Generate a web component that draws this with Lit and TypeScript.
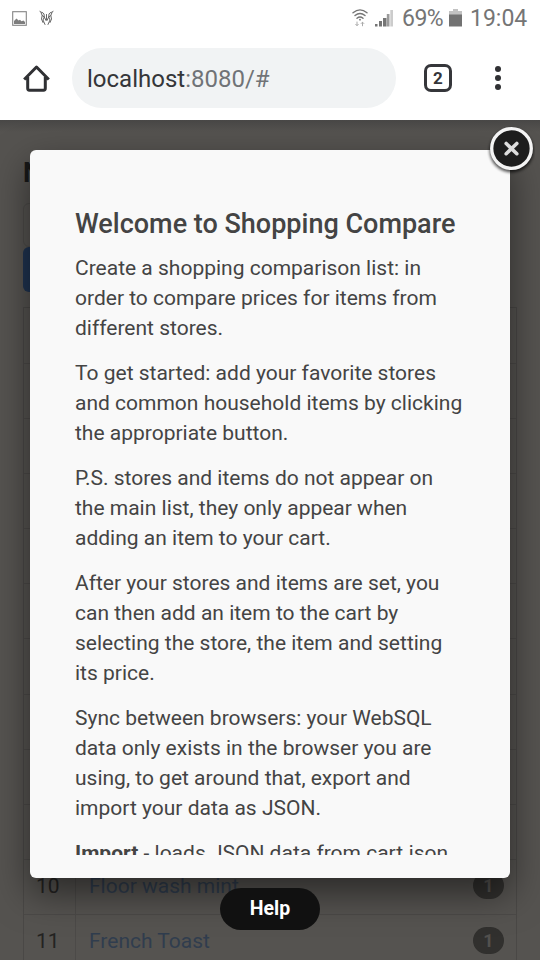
import { LitElement, html, css, svg } from "lit";
import { customElement } from "lit/decorators.js";

const paragraphs: string[][] = [
  ["Create a shopping comparison list: in", "order to compare prices for items from", "different stores."],
  ["To get started: add your favorite stores", "and common household items by clicking", "the appropriate button."],
  ["P.S. stores and items do not appear on", "the main list, they only appear when", "adding an item to your cart."],
  ["After your stores and items are set, you", "can then add an item to the cart by", "selecting the store, the item and setting", "its price."],
  ["Sync between browsers: your WebSQL", "data only exists in the browser you are", "using, to get around that, export and", "import your data as JSON."],
];

const rows = Array.from({ length: 11 }, (_, i) => ({
  n: i + 1,
  name: i === 9 ? "Floor wash mint" : i === 10 ? "French Toast" : "",
  count: i >= 9 ? 1 : 0,
}));

@customElement("status-bar")
class StatusBar extends LitElement {
  static styles = css`
    :host { display: flex; height: 36px; align-items: center; padding: 0 12px 0 12px; color: #757575;
      font: 23px/36px Roboto, sans-serif; }
    svg { display: block; flex: none; }
    .pic { margin-right: 12px; }
    .gap { flex: 1; }
    .wifi { margin-right: 7px; }
    .pct { margin: 2px 0 0 9px; width: 43px; letter-spacing: -0.5px; font-size: 23px; white-space: nowrap; }
    .bat { margin-left: 4px; }
    .time { margin: 2px 0 0 8px; width: 58px; letter-spacing: 0; white-space: nowrap; }
  `;
  render() {
    return html`
      <svg class="pic" width="15" height="15" viewBox="0 0 15 15">
        <rect x=".7" y=".7" width="13.6" height="13.6" fill="none" stroke="#858585" stroke-width="1.1"/>
        <path d="M2 13V10L4.500 7.500 6.500 9.500l1.500-.8L9.500 10.300l2-.8 1.500 1.500V13z" fill="#7d7d7d"/>
      </svg>
      <svg width="15" height="16" viewBox="0 0 15 16" fill="none" stroke="#666" stroke-width="1" stroke-linecap="round" stroke-linejoin="round">
        <path d="M.8 1.200C1.500 3 4 1.800 5 4L5.300 7M14.200 1.200C13.500 3 11 1.800 10 4L9.700 7M2 2.500 3.200 5.500 5.300 7 4 10 6 14.500M13 2.500 11.800 5.500 9.700 7 11 10 9 14.500M3.200 5.500 2.500 9 4 12.500M11.800 5.500 12.500 9 11 12.500M7.500 4.500V9.500M5.300 7 7 10.500M9.700 7 8 10.500"/>
      </svg>
      <span class="gap"></span>
      <svg class="wifi" width="16" height="18" viewBox="0 0 16 18" fill="none" stroke="#757575" stroke-width="1.400" stroke-linecap="round">
        <path d="M1 3.800Q8-2 15 3.800M3 6.500Q8 2.300 13 6.500M5 9.200Q8 6.600 11 9.200"/>
        <circle cx="8" cy="10.700" r=".9" fill="#757575" stroke="none"/>
        <path d="M5 13v3.500M3.700 15.300 5 16.600l1.300-1.300M10.500 16.800v-3.500M9.200 14.500l1.300-1.300 1.300 1.300" stroke="#aaa" stroke-width="1"/>
      </svg>
      <svg width="18" height="18" viewBox="0 0 18 18" fill="#757575">
        <path d="M0 15h2.500v2.500H0zM4 12h3v5.500H4zM8 9h3.500v8.500H8z"/>
        <path d="M11.800 5h2.700v12.500h-2.700z" fill="#9b9b9b"/><path d="M15.300 1H18v16.500h-2.700z" fill="#ccc"/>
      </svg>
      <span class="pct">69%</span>
      <svg class="bat" width="13" height="18" viewBox="0 0 13 18">
        <path d="M4 0h5v2h4v4H0V2h4z" fill="#c2c2c2"/><path d="M0 5.500h13V17.500H0z" fill="#727272"/>
      </svg>
      <span class="time">19:04</span>`;
  }
}

@customElement("address-bar")
class AddressBar extends LitElement {
  static styles = css`
    :host { display: flex; height: 84px; align-items: center; padding: 0 39px 0 23px; font-family: Roboto, sans-serif; }
    svg { display: block; flex: none; }
    .url { flex: none; box-sizing: border-box; width: 324px; height: 60px; border-radius: 30px; background: #f1f3f4;
      margin: 0 28px 0 22px; padding-left: 15px; font-size: 24px; line-height: 62px; color: #343639; }
    .port { color: #707377; }
    .tabs { flex: none; box-sizing: border-box; width: 28px; height: 28px; border: 3px solid #35363a; border-radius: 7px;
      color: #35363a; font-weight: 700; font-size: 17px; line-height: 22px; text-align: center; }
    .menu { margin-left: auto; }
  `;
  render() {
    return html`
      <svg width="27" height="28" viewBox="0 0 27 28" fill="none" stroke="#303134" stroke-width="3" stroke-linejoin="round">
        <path d="M1.200 15.500 13.500 3 25.800 15.500M4.700 13V24.300Q4.700 26.200 6.400 26.200H20.600Q22.300 26.200 22.300 24.300V13"/>
      </svg>
      <div class="url">localhost<span class="port">:8080/#</span></div>
      <div class="tabs">2</div>
      <svg class="menu" width="6" height="26" viewBox="0 0 6 26" fill="#303134">
        ${[4, 13, 22].map((y) => svg`<circle cx="3" cy=${y} r="3"/>`)}
      </svg>`;
  }
}

@customElement("cart-page")
class CartPage extends LitElement {
  static styles = css`
    :host { display: block; height: 840px; overflow: hidden; box-sizing: border-box; padding: 35px 23px 0;
      background: linear-gradient(#484746, #555350 12px); font: 21px/30px Roboto, sans-serif; color: #242322; }
    .title { height: 36px; margin: 0 0 12px; font-size: 27px; line-height: 36px; font-weight: 700; color: #181818; }
    .field { height: 42px; margin-right: 14px; border: 1px solid #4c4a48; border-radius: 6px; }
    .button { height: 45px; margin: 0 14px 15px 0; border-radius: 6px; background: #1f3350; }
    .table { border: 1px solid #4a4846; }
    .head { height: 55px; }
    .row { display: grid; grid-template-columns: 52px 1fr auto; height: 54.1px; border-top: 1px solid #4c4a48; line-height: 53px; }
    .num { padding-left: 12px; border-right: 1px solid #4c4a48; }
    .name { padding-left: 13px; color: #303d4e; }
    .badge { width: 31px; height: 27px; margin: 12px 12px 0 0; border-radius: 14px; background: #31302e;
      color: #53514e; text-align: center; font-size: 18px; font-weight: 700; line-height: 27px; }
  `;
  render() {
    return html`
      <h1 class="title">N</h1>
      <div class="field"></div>
      <div class="button"></div>
      <div class="table">
        <div class="head"></div>
        ${rows.map((r) => html`<div class="row">
          <div class="num">${r.n}</div><div class="name">${r.name}</div>
          ${r.count ? html`<div class="badge">${r.count}</div>` : ""}
        </div>`)}
      </div>`;
  }
}

@customElement("welcome-dialog")
class WelcomeDialog extends LitElement {
  static styles = css`
    :host { display: block; box-sizing: border-box; width: 480px; height: 728px; padding: 23px 22px;
      background: #f9f9f9; border-radius: 6px; color: #444; font: 21px/30px Roboto, sans-serif;
      box-shadow: 0 15px 37px rgba(0, 0, 0, .5); }
    .scroll { height: 682px; overflow: hidden; box-sizing: border-box; padding: 30px 0 0 23px; }
    h2 { margin: 0 0 8px; font-size: 27px; line-height: 42px; font-weight: 500; white-space: nowrap; }
    p { margin: 0 0 15px; white-space: nowrap; }
    .line { display: block; }
    .close { position: absolute; top: -25px; right: -25px; }
  `;
  render() {
    return html`
      <div class="scroll">
        <h2>Welcome to Shopping Compare</h2>
        ${paragraphs.map((p) => html`<p>${p.map((l) => html`<span class="line">${l}</span>`)}</p>`)}
        <p><b>Import</b> - loads JSON data from cart.json</p>
      </div>
      <svg class="close" width="48" height="52" viewBox="0 0 48 52">
        <defs><filter id="s" x="-30%" y="-30%" width="160%" height="160%"><feGaussianBlur stdDeviation="1.800"/></filter></defs>
        <circle cx="24.500" cy="25.500" r="22" fill="#000" opacity=".65" filter="url(#s)"/>
        <circle cx="24.500" cy="23.500" r="19.800" fill="#1d1d1d" stroke="#f4f4f4" stroke-width="3.300"/>
        <path d="M19.200 18.500 29.800 28.700M29.800 18.500 19.200 28.700" stroke="#ddd" stroke-width="3.600" stroke-linecap="round"/>
      </svg>`;
  }
}

@customElement("app-root")
class AppRoot extends LitElement {
  static styles = css`
    :host { display: block; position: relative; width: 540px; height: 960px; overflow: hidden; background: #fff; }
    .dialog { position: absolute; left: 30px; top: 150px; }
    .help { position: absolute; left: 220px; top: 888px; width: 100px; height: 42px; border-radius: 21px;
      background: #111; color: #fff; text-align: center; font: 700 19.5px/41px Roboto, sans-serif; }
  `;
  render() {
    return html`
      <status-bar></status-bar>
      <address-bar></address-bar>
      <cart-page></cart-page>
      <welcome-dialog class="dialog"></welcome-dialog>
      <div class="help">Help</div>`;
  }
}
